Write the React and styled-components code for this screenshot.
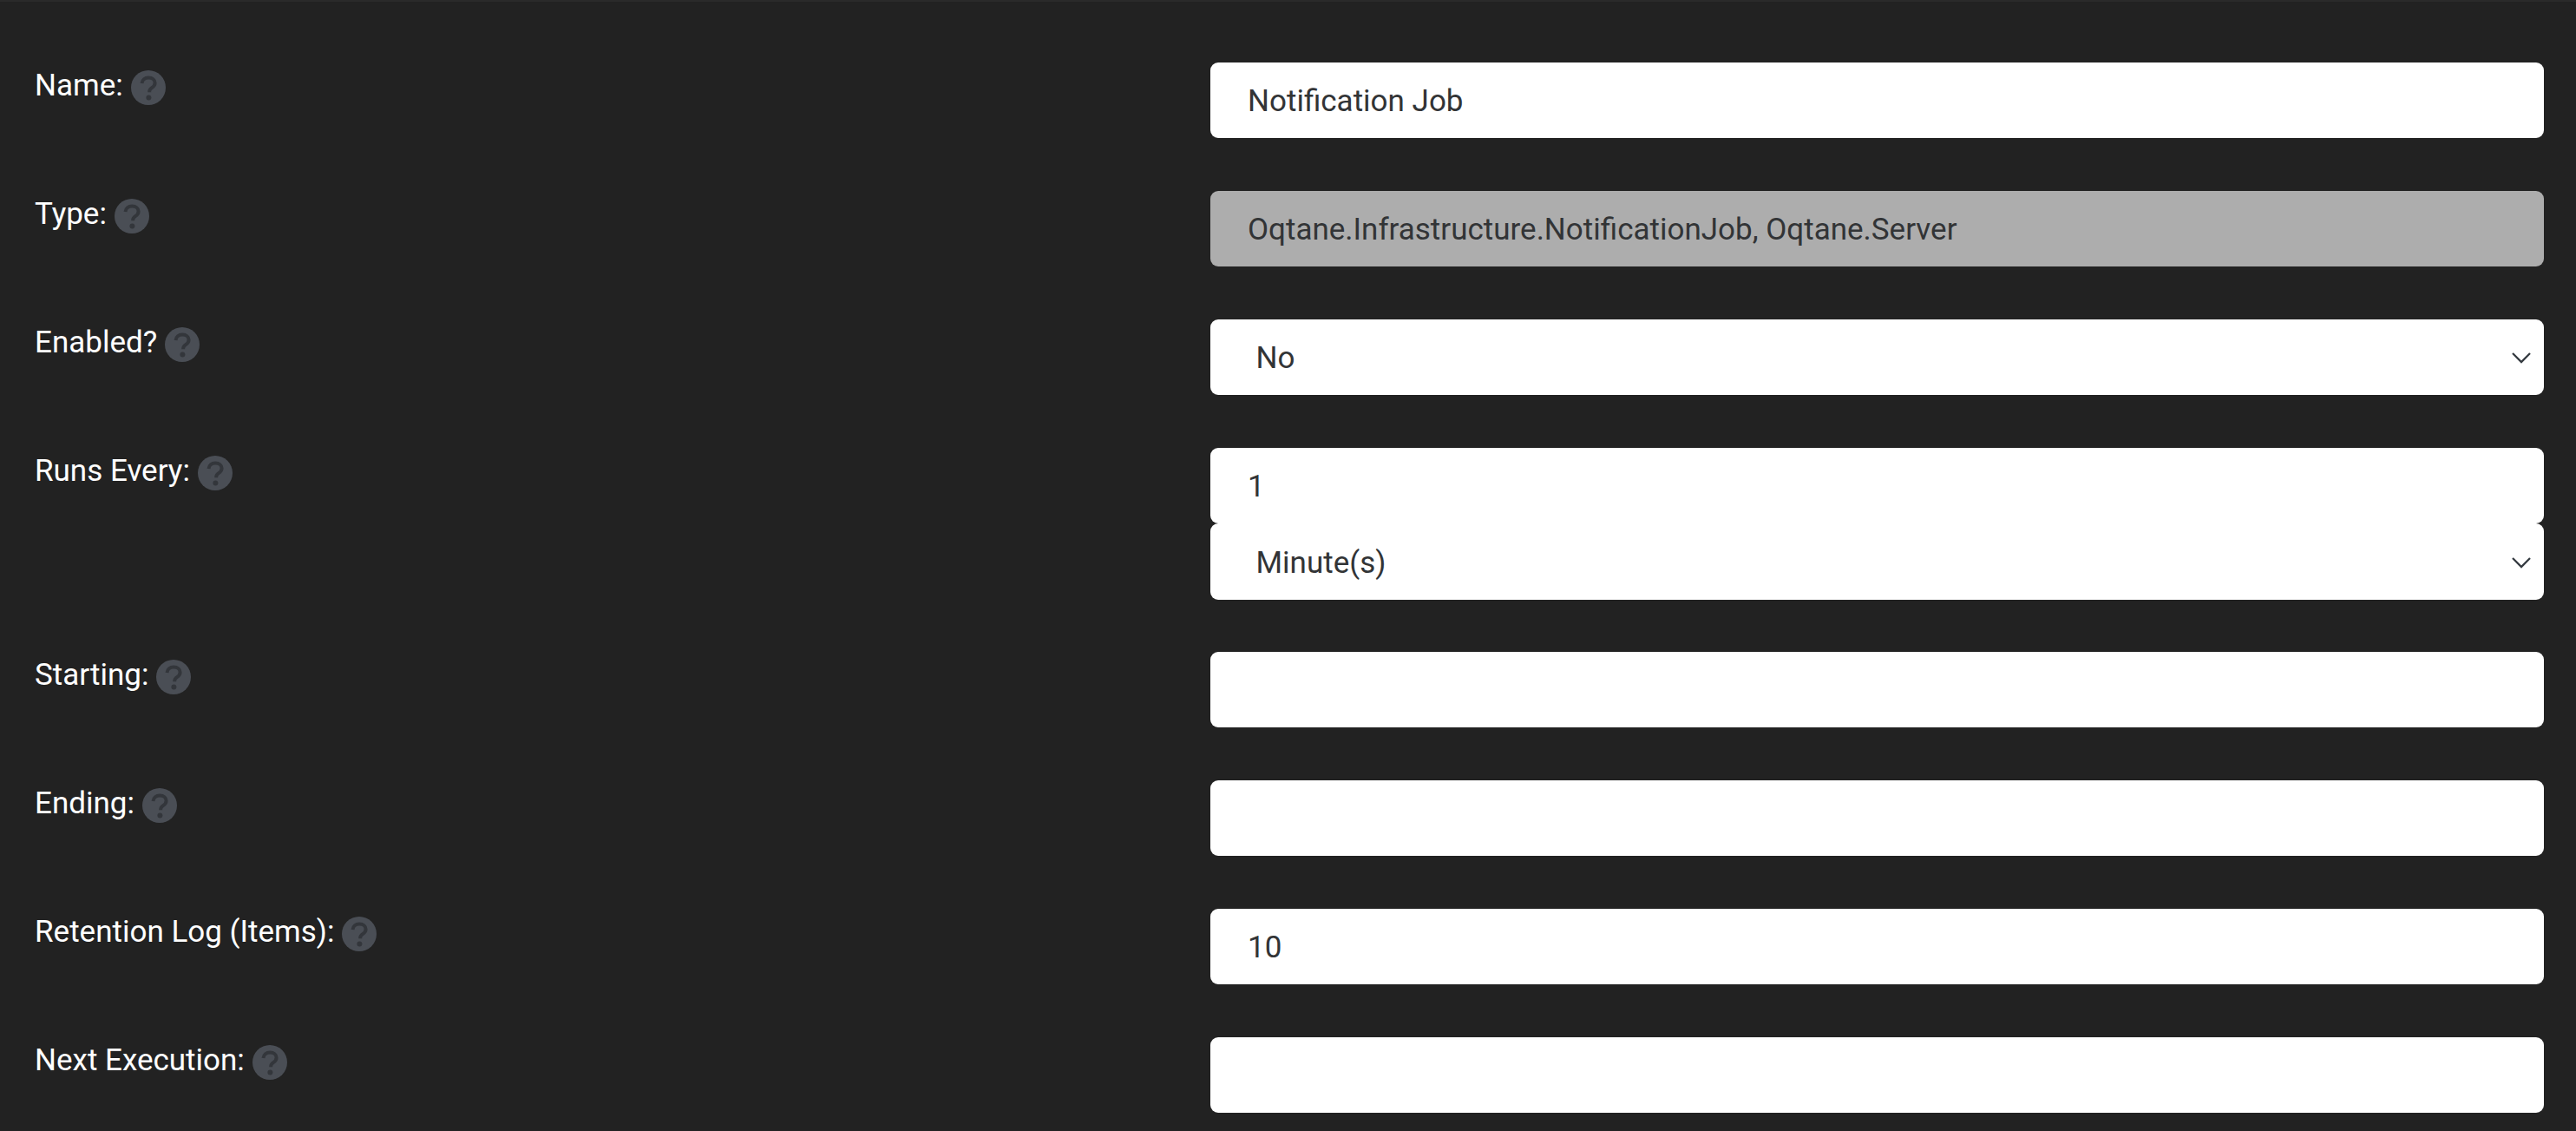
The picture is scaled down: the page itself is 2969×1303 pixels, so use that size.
import React from "react";
import styled, { createGlobalStyle } from "styled-components";

const rows = [
  { label: "Name:", fields: [{ value: "Notification Job" }] },
  { label: "Type:", fields: [{ value: "Oqtane.Infrastructure.NotificationJob, Oqtane.Server", disabled: true }] },
  { label: "Enabled?", fields: [{ value: "No", select: true }] },
  { label: "Runs Every:", fields: [{ value: "1" }, { value: "Minute(s)", select: true }] },
  { label: "Starting:", fields: [{ value: "" }] },
  { label: "Ending:", fields: [{ value: "" }] },
  { label: "Retention Log (Items):", fields: [{ value: "10" }] },
  { label: "Next Execution:", fields: [{ value: "" }] },
];

function HelpIcon() {
  return (
    <HelpBadge viewBox="0 0 40 40" aria-hidden="true">
      <circle cx="20" cy="20" r="20" fill="#4a4e55" />
      <path
        d="M12.5 15c.4-4 3.4-6.4 7.7-6.4 4.4 0 7.4 2.4 7.4 6 0 2.7-1.4 4.1-3.6 5.5-2 1.300-2.800 2.300-2.800 4.200v1"
        fill="none"
        stroke="#33363b"
        strokeWidth="4"
      />
      <circle cx="20.400" cy="31.500" r="3" fill="#33363b" />
    </HelpBadge>
  );
}

function App() {
  return (
    <Page>
      <GlobalStyle />
      {rows.map((row) => (
        <Row key={row.label}>
          <Label>
            {row.label}
            <HelpIcon />
          </Label>
          <Fields>
            {row.fields.map((field, i) =>
              field.select ? (
                <SelectBox key={i}>
                  {field.value}
                  <Chevron viewBox="0 0 22 13" aria-hidden="true">
                    <path d="M1 1l10 10L21 1" fill="none" stroke="#343a40" strokeWidth="2.300" />
                  </Chevron>
                </SelectBox>
              ) : (
                <InputBox key={i} $disabled={field.disabled}>
                  {field.value}
                </InputBox>
              )
            )}
          </Fields>
        </Row>
      ))}
    </Page>
  );
}

export default App;

const GlobalStyle = createGlobalStyle`
  html, body {
    margin: 0;
    padding: 0;
    background: #222222;
    overflow: hidden;
  }
`;

const Page = styled.main`
  box-sizing: border-box;
  height: 1303px;
  overflow: hidden;
  padding: 70px 37px 0 40px;
  background: #222222;
  border-top: 2px solid #2a2a2a;
  font-family: Roboto, "Liberation Sans", sans-serif;
  font-size: 35px;
  display: flex;
  flex-direction: column;
  gap: 61px;
`;

const Row = styled.div`
  display: grid;
  grid-template-columns: 1355px 1537px;
  align-items: start;
  flex-shrink: 0;
`;

const Label = styled.label`
  display: flex;
  align-items: center;
  gap: 9px;
  color: #ffffff;
  line-height: 40px;
  margin-top: 5px;
`;

const HelpBadge = styled.svg`
  width: 40px;
  height: 40px;
  margin-top: 4px;
`;

const Fields = styled.div`
  display: flex;
  flex-direction: column;
`;

const InputBox = styled.div`
  box-sizing: border-box;
  height: 87px;
  padding: 2px 43px 0;
  display: flex;
  align-items: center;
  border-radius: 9px;
  color: #323436;
  background: ${(p) => (p.$disabled ? "#adadad" : "#ffffff")};
`;

const SelectBox = styled(InputBox)`
  padding-left: 52.5px;
  justify-content: space-between;
  padding-right: 15px;

  &:not(:first-child) {
    height: 88px;
    margin-bottom: -1px;
  }
`;

const Chevron = styled.svg`
  width: 22px;
  height: 13px;
`;
